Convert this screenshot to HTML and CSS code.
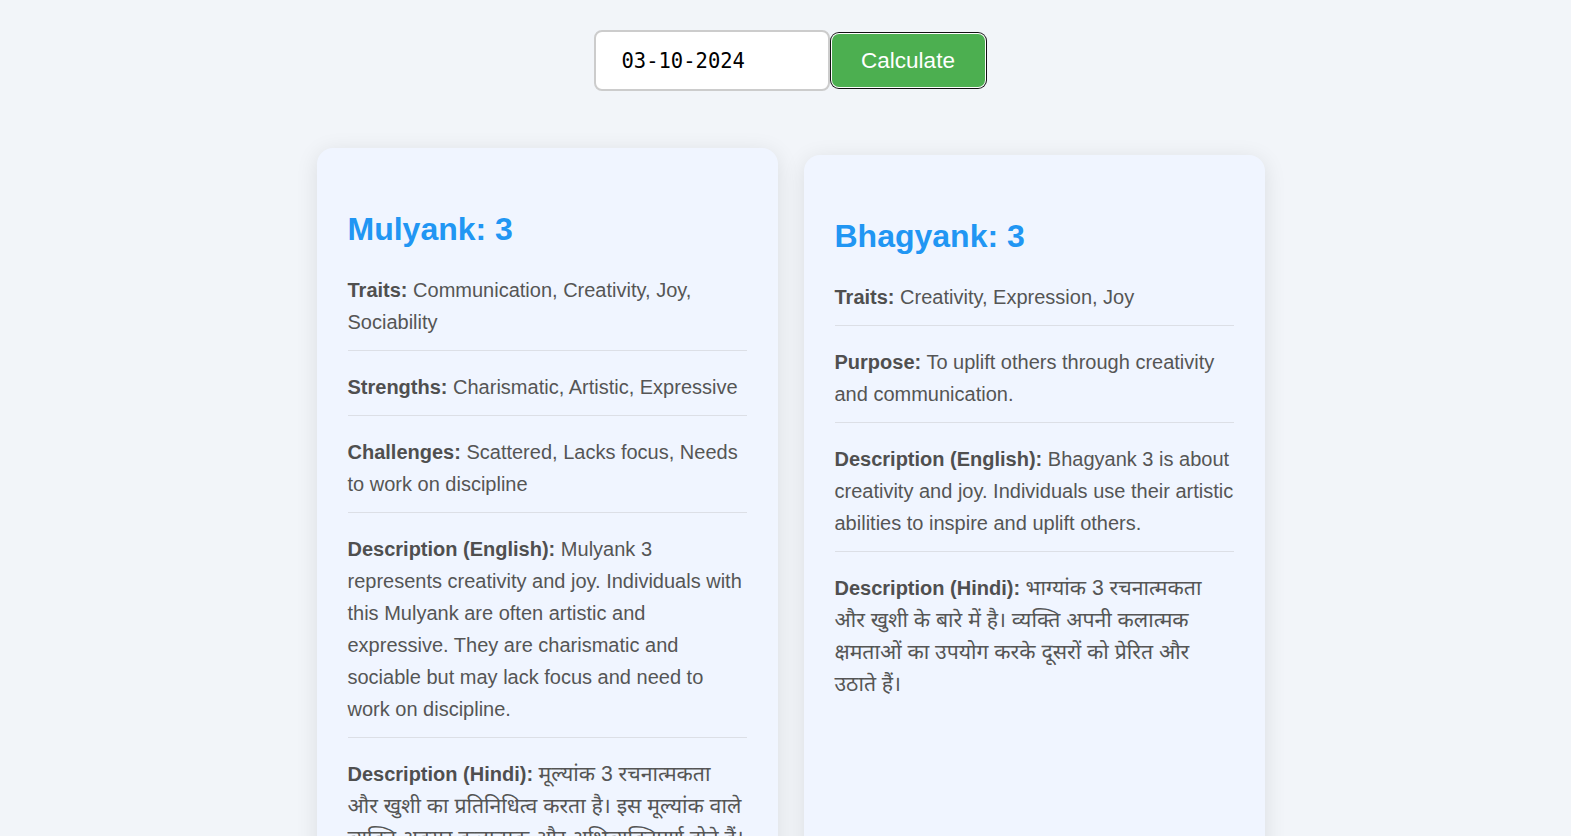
FILE: index.html
```html
<!DOCTYPE html>
<html lang="en">
<head>
<meta charset="utf-8">
<title>Numerology Calculator</title>
<link rel="stylesheet" href="styles.css">
</head>
<body>
<main class="page">
  <form class="calc-form">
    <input class="date-input" type="text" value="03-10-2024">
    <button class="calc-btn" type="button">Calculate</button>
  </form>
  <section class="cards">
    <article class="card card-raised">
      <h2 class="card-title">Mulyank: 3</h2>
      <p class="item"><strong>Traits:</strong> Communication, Creativity, Joy, Sociability</p>
      <p class="item"><strong>Strengths:</strong> Charismatic, Artistic, Expressive</p>
      <p class="item"><strong>Challenges:</strong> Scattered, Lacks focus, Needs to work on discipline</p>
      <p class="item"><strong>Description (English):</strong> Mulyank 3 represents creativity and joy. Individuals with this Mulyank are often artistic and expressive. They are charismatic and sociable but may lack focus and need to work on discipline.</p>
      <p class="item item-last"><strong>Description (Hindi):</strong> <span class="hi" lang="hi">मूल्यांक 3 रचनात्मकता और खुशी का प्रतिनिधित्व करता है। इस मूल्यांक वाले व्यक्ति अक्सर कलात्मक और अभिव्यक्तिपूर्ण होते हैं। वे करिश्माई और मिलनसार होते हैं लेकिन उनमें ध्यान की कमी हो सकती है और उन्हें अनुशासन पर काम करने की आवश्यकता होती है।</span></p>
    </article>
    <article class="card">
      <h2 class="card-title">Bhagyank: 3</h2>
      <p class="item"><strong>Traits:</strong> Creativity, Expression, Joy</p>
      <p class="item"><strong>Purpose:</strong> To uplift others through creativity and communication.</p>
      <p class="item"><strong>Description (English):</strong> Bhagyank 3 is about creativity and joy. Individuals use their artistic abilities to inspire and uplift others.</p>
      <p class="item item-last"><strong>Description (Hindi):</strong> <span class="hi" lang="hi">भाग्यांक 3 रचनात्मकता और खुशी के बारे में है। व्यक्ति अपनी कलात्मक क्षमताओं का उपयोग करके दूसरों को प्रेरित और उठाते हैं।</span></p>
    </article>
  </section>
</main>
</body>
</html>
```
FILE: styles.css
```css
html, body {
  margin: 0;
  padding: 0;
}
body {
  background: #f2f5f9;
  font-family: "Liberation Sans", Arial, "Noto Sans Devanagari", "Lohit Devanagari", sans-serif;
  color: #555;
}
.page {
  padding: 30px 0 40px 10px;
}
.calc-form {
  display: flex;
  justify-content: center;
  align-items: center;
  margin: 0;
  padding-right: 3px;
}
.date-input {
  box-sizing: border-box;
  width: 236px;
  height: 61px;
  border: 2px solid #cccccc;
  border-radius: 8px;
  background: #fff;
  padding: 0 10px 0 26px;
  font-family: "DejaVu Sans Mono", monospace;
  font-size: 20.5px;
  color: #000;
  outline: none;
  margin: 0;
}
.calc-btn {
  box-sizing: border-box;
  width: 153px;
  height: 53px;
  margin-left: 2px;
  border: none;
  border-radius: 7px;
  background: #4caf50;
  color: #fff;
  font-family: "Liberation Sans", Arial, sans-serif;
  font-size: 22.5px;
  cursor: pointer;
  box-shadow: 0 0 0 1px #fff, 0 0 0 2px #111;
}
.cards {
  display: flex;
  justify-content: center;
  align-items: stretch;
  gap: 26px;
  margin-top: 64px;
}
.card {
  box-sizing: border-box;
  width: 461px;
  background: #f0f5ff;
  border-radius: 16px;
  padding: 36px 31px 30px;
  box-shadow: 0 4px 22px rgba(0, 0, 0, 0.1);
}
.card-raised {
  transform: translateY(-7px);
}
.card-title {
  color: #2196f3;
  font-size: 32px;
  font-weight: bold;
  line-height: normal;
  margin: 0.83em 0;
}
.item {
  font-size: 20px;
  line-height: 32px;
  margin: 20px 0;
  padding-bottom: 12px;
  border-bottom: 1px solid #dcdfe6;
}
.item strong {
  color: #4f4f4f;
}
.hi {
  font-size: 21.2px;
}
.item-last {
  border-bottom: none;
  padding-bottom: 0;
}
```
